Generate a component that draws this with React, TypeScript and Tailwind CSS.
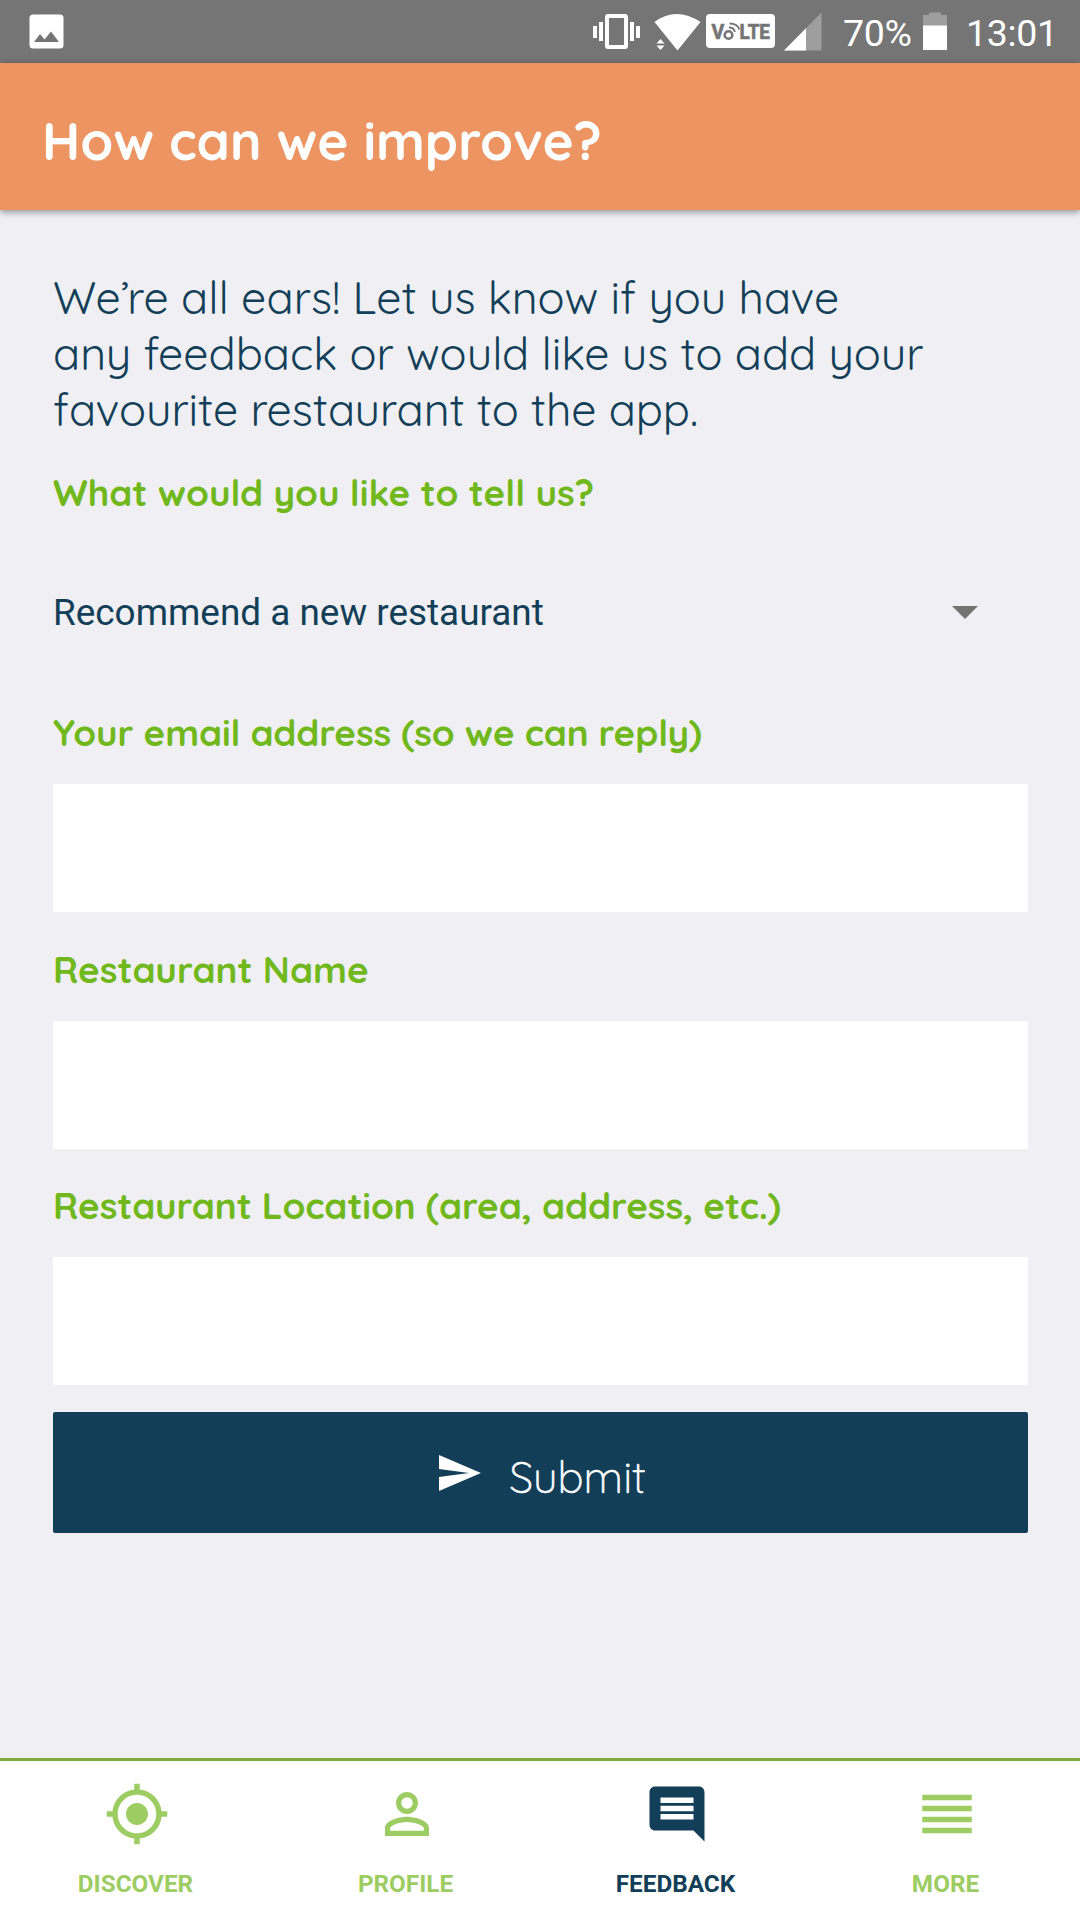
import React, { useState } from 'react';
import { MdGpsFixed, MdPersonOutline, MdComment, MdReorder, MdSend } from 'react-icons/md';

const fields = [
  { id: 'email', label: 'Your email address (so we can reply)', type: 'email', tracking: 'tracking-[-0.14px]' },
  { id: 'name', label: 'Restaurant Name', type: 'text', tracking: 'tracking-normal' },
  { id: 'location', label: 'Restaurant Location (area, address, etc.)', type: 'text', tracking: 'tracking-[-0.09px]' },
];

const tabs = [
  { label: 'DISCOVER', icon: MdGpsFixed },
  { label: 'PROFILE', icon: MdPersonOutline },
  { label: 'FEEDBACK', icon: MdComment },
  { label: 'MORE', icon: MdReorder },
];

function StatusBar() {
  return (
    <div className="h-[63px] shrink-0 bg-[#757575]">
      <svg className="block h-[63px] w-[1080px]" viewBox="0 0 1080 63" fill="#fff">
        {/* Screenshot notification */}
        <rect x="29.5" y="14.5" width="34" height="34" rx="3.5" />
        <path d="M34 42l6-8 4.500 5.500 6.500-8 8 10.500z" fill="#757575" />

        {/* Vibrate */}
        <rect x="607" y="16" width="19" height="31" rx="1" fill="none" stroke="#fff" strokeWidth="4" />
        <path d="M593 26h4v12h-4zM599 22h4v19h-4zM630 22h4v19h-4zM636 26h4v12h-4z" />

        {/* Wifi */}
        <path d="M654.500 22Q676 6 700.500 22L677.500 50.500z" />
        <path d="M656.500 43.500l4-4.500 4 4.500zM656.500 45.500h8l-4 4.500z" />

        {/* VoLTE */}
        <rect x="706" y="14" width="69" height="34" rx="4" />
        <g fill="#757575" stroke="#757575" strokeWidth="0.6" fontFamily="Roboto, sans-serif" fontWeight="700">
          <text x="711.500" y="38.500" fontSize="19.500">V</text>
          <text x="739.500" y="38.500" fontSize="19.500" textLength="30.500" lengthAdjust="spacingAndGlyphs">LTE</text>
        </g>
        <circle cx="728.500" cy="35" r="3.800" fill="none" stroke="#757575" strokeWidth="2.600" />
        <path d="M729 27.500q5 0 6 4.500M729.500 23.500q8 0 10 6" fill="none" stroke="#757575" strokeWidth="1.800" />

        {/* Signal */}
        <path d="M821.500 12.500V50.500H784z" fill="#9e9e9e" />
        <path d="M806 28.200V50.500H784z" />

        <text x="843" y="46" fontSize="37.500" fontFamily="Roboto, sans-serif" textLength="69">70%</text>

        {/* Battery */}
        <path d="M929 12.500h12v2.500h6v11h-24v-11h6z" fill="#9e9e9e" />
        <path d="M923 25.500h24v24.500h-24z" />

        <text x="966" y="46" fontSize="37.500" fontFamily="Roboto, sans-serif" textLength="92">13:01</text>
      </svg>
    </div>
  );
}

export default function App() {
  const [values, setValues] = useState<Record<string, string>>({});

  return (
    <div className="flex h-[1920px] w-[1080px] flex-col overflow-hidden bg-[#efeff4] font-[Quicksand,Lato,sans-serif]">
      <StatusBar />

      {/* Header */}
      <header className="relative flex h-[147px] shrink-0 items-center bg-[#ec9563] pl-[42px] shadow-[0_2px_7px_rgba(0,0,0,0.4)]">
        <h1 className="mt-[9px] text-[53.100px] leading-none font-bold whitespace-nowrap text-white">
          How can we improve?
        </h1>
      </header>

      {/* Feedback form */}
      <main className="flex flex-1 flex-col px-[53px] pt-[59px]">
        <p className="text-[44.800px] leading-[56px] text-[#123f57]">
          We<span className="tracking-[-2.4px]">’</span>re all ears! Let us know if you have
          <br />
          any feedback or would like us to add your
          <br />
          <span className="tracking-[-0.07px]">favourite restaurant to the app.</span>
        </p>

        <div className="mt-[31px] text-[36.800px] leading-[48px] font-bold whitespace-nowrap text-[#70b81c]">
          What would you like to tell us?
        </div>

        <button className="mt-[67px] flex h-[60px] items-center justify-between pr-[49px] font-[Roboto,sans-serif] text-[36.900px] text-[#123f57]">
          <span>Recommend a new restaurant</span>
          <svg className="mb-[2px] h-[13px] w-[26px]" viewBox="0 0 26 13" fill="#737373">
            <path d="M0 0h26L13 13z" />
          </svg>
        </button>

        <div className="mt-[65px] flex flex-col gap-[32.500px]">
          {fields.map((field) => (
            <div key={field.id} className="flex flex-col gap-7">
              <label
                htmlFor={field.id}
                className={`text-[36.800px] leading-[48px] font-bold whitespace-nowrap text-[#70b81c] ${field.tracking}`}
              >
                {field.label}
              </label>
              <input
                id={field.id}
                type={field.type}
                value={values[field.id] || ''}
                onChange={(e) => setValues({ ...values, [field.id]: e.target.value })}
                className="h-32 w-[975px] bg-white px-6 text-[36px] text-[#123f57] outline-none"
              />
            </div>
          ))}
        </div>

        <button className="mt-[27px] flex h-[121px] w-[975px] items-center justify-center rounded-xs bg-[#123f57] text-white">
          <MdSend className="mr-px size-12" />
          <span className="mt-2 ml-[25px] text-[43.500px] leading-none font-light [-webkit-text-stroke:0.5px_white]">
            Submit
          </span>
        </button>
      </main>

      {/* Tab bar */}
      <nav className="grid h-[162px] shrink-0 grid-cols-4 border-t-[3px] border-[#80ab42] bg-white font-[Roboto,sans-serif]">
        {tabs.map((tab) => {
          const Icon = tab.icon;
          return (
            <div
              key={tab.label}
              className={`flex flex-col items-center pt-5 ${tab.label === 'FEEDBACK' ? 'text-[#123f57]' : 'text-[#9dcd62]'}`}
            >
              <Icon className="ml-[3px] size-[66px]" />
              <span className="mt-[23px] ml-px text-[24.300px] leading-7 font-bold">{tab.label}</span>
            </div>
          );
        })}
      </nav>
    </div>
  );
}
